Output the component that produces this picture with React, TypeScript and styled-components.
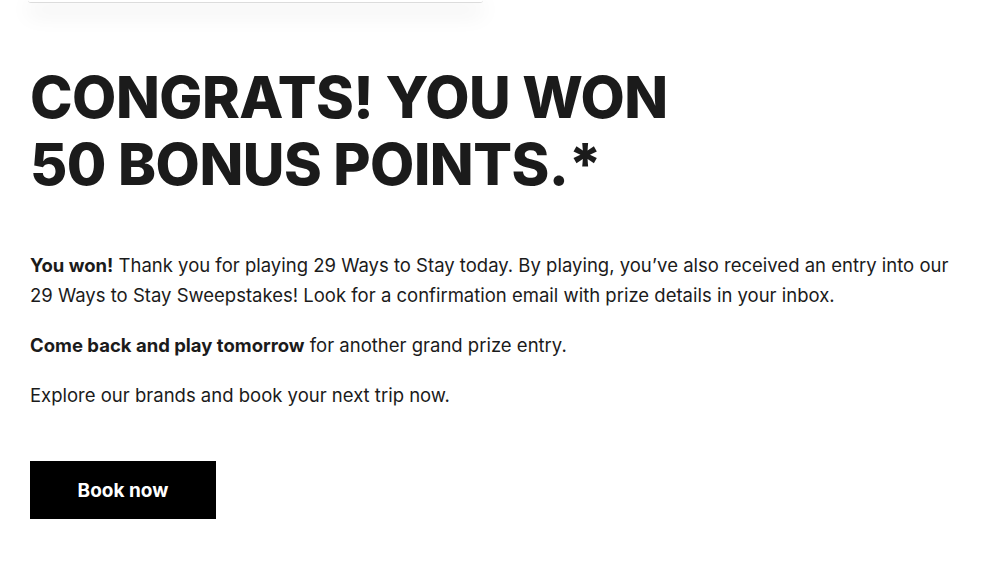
import { FC } from 'react';
import styled, { createGlobalStyle } from 'styled-components';

const GlobalStyle = createGlobalStyle`
    html, body {
        margin: 0;
        padding: 0;
        background: #fff;
    }
    body {
        font-family: Inter, "Liberation Sans", sans-serif;
        color: #1b1b1b;
    }
`;

const Page = styled.main`
    width: 1000px;
    height: 562px;
    overflow: hidden;
    padding: 0 30px;
    box-sizing: border-box;
`;

const PrevCard = styled.div`
    width: 455px;
    height: 2px;
    margin-left: -2px;
    background: #fff;
    border-bottom: 1px solid #dcdcdc;
    border-radius: 0 0 4px 4px;
    box-shadow: 0 8px 22px rgba(0, 0, 0, 0.24);
`;

const Heading = styled.h1`
    margin: 61px 0 0;
    font-size: 57.3px;
    line-height: 67px;
    font-weight: 800;
    letter-spacing: -0.5px;
    text-transform: uppercase;
    color: #1b1b1b;
`;

const Body = styled.section`
    margin-top: 52px;
`;

const Para = styled.p`
    margin: 0 0 20px;
    font-size: 18.5px;
    line-height: 30px;
    color: #1b1b1b;

    strong {
        font-weight: 700;
    }
`;

const BookButton = styled.button`
    margin-top: 31px;
    width: 186px;
    height: 58px;
    border: none;
    background: #000;
    color: #fff;
    font-family: inherit;
    font-size: 19px;
    font-weight: 700;
    cursor: pointer;
`;

const App: FC = () => {
    return (
        <>
            <GlobalStyle />
            <Page>
                <PrevCard />
                <Heading>
                    Congrats! You won
                    <br />
                    50 bonus points.*
                </Heading>
                <Body>
                    <Para>
                        <strong>You won!</strong> Thank you for playing 29 Ways to Stay today. By playing, you’ve also
                        received an entry into our 29 Ways to Stay Sweepstakes! Look for a confirmation email with
                        prize details in your inbox.
                    </Para>
                    <Para>
                        <strong>Come back and play tomorrow</strong> for another grand prize entry.
                    </Para>
                    <Para>Explore our brands and book your next trip now.</Para>
                </Body>
                <BookButton>Book now</BookButton>
            </Page>
        </>
    );
};

export default App;
